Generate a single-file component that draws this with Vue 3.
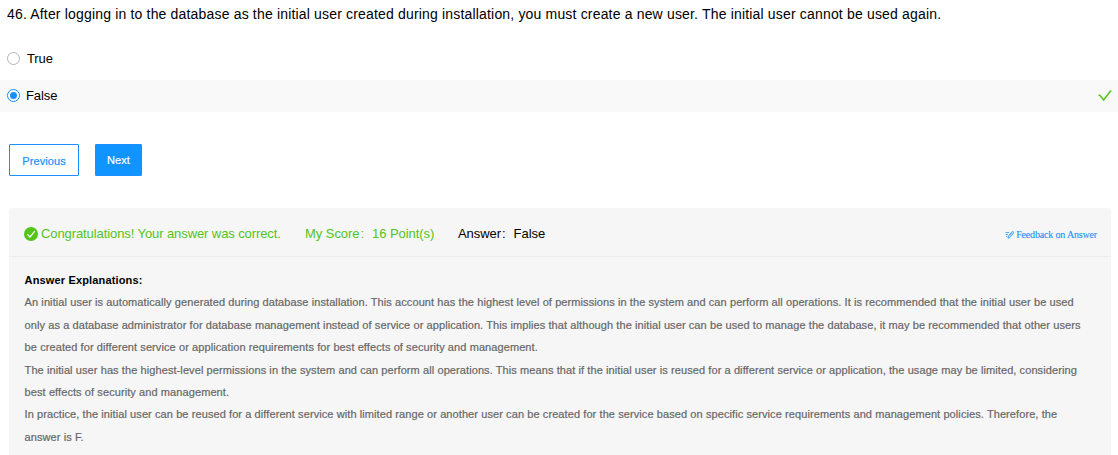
<script setup>
const lines = [
  'An initial user is automatically generated during database installation. This account has the highest level of permissions in the system and can perform all operations. It is recommended that the initial user be used',
  'only as a database administrator for database management instead of service or application. This implies that although the initial user can be used to manage the database, it may be recommended that other users',
  'be created for different service or application requirements for best effects of security and management.',
  'The initial user has the highest-level permissions in the system and can perform all operations. This means that if the initial user is reused for a different service or application, the usage may be limited, considering',
  'best effects of security and management.',
  'In practice, the initial user can be reused for a different service with limited range or another user can be created for the service based on specific service requirements and management policies. Therefore, the',
  'answer is F.',
]
</script>

<template>
  <main class="quiz">
    <div class="question"><span>46. After logging in to the database as the initial user created during installation, you must create a new user. The initial user cannot be used again.</span></div>
    <div class="option first">
      <span class="radio"></span><span class="label true">True</span>
    </div>
    <div class="option selected">
      <span class="radio on"></span><span class="label">False</span>
      <svg class="tick" width="14" height="12" viewBox="0 0 14 12"><path d="M.6 5.3H1.8L5.6 10 12.4 1.2 13.4 1" fill="none" stroke="#52c41a" stroke-width="1.5" /></svg>
    </div>
    <div class="actions">
      <button class="btn previous">Previous</button>
      <button class="btn next">Next</button>
    </div>
    <section class="result">
      <header class="summary">
        <svg class="badge" width="14" height="14" viewBox="0 0 14 14"><circle cx="7" cy="7" r="7" fill="#52c41a" /><path d="M3.3 7.2 6 10 10.8 4.2" fill="none" stroke="#fff" stroke-width="1.2" /></svg>
        <span class="congrats">Congratulations! Your answer was correct.</span>
        <span class="score">My Score<i>:</i>16 Point(s)</span>
        <span class="answer">Answer<i>:</i>False</span>
        <a class="feedback">
          <svg width="9" height="8" viewBox="0 0 9 8"><path d="M.5 1.5H4M.5 3.5H3M1 5.5H2.4M3 7.3 3.6 4.8 6.8 .8 8.5 .8 8 2.8 5 6.5ZM4.6 5.2 7 2" fill="none" stroke="#1890ff" stroke-width=".75" /></svg>
          <span>Feedback on Answer</span>
        </a>
      </header>
      <div class="explanation">
        <h2>Answer Explanations:</h2>
        <p v-for="(line, i) in lines" :key="i"><span>{{ line }}</span></p>
      </div>
    </section>
  </main>
</template>

<style>
body { background: #fff; }
</style>

<style scoped>
.quiz { width: 1118px; height: 455px; overflow: hidden; font-family: "Liberation Sans", Arial, sans-serif; font-size: 13px; color: #000; white-space: nowrap; }
.question { height: 43px; box-sizing: border-box; padding: 4px 0 0 7px; font-size: 14px; line-height: 20px; letter-spacing: .173px; }
.option { height: 32px; box-sizing: border-box; display: flex; align-items: center; padding: 0 6px 0 7px; }
.option.first { height: 30px; margin-bottom: 7px; }
.selected { background: #f9f9f9; padding-bottom: 1px; }
.radio { width: 13px; height: 13px; box-sizing: border-box; border: 1px solid #b5b5b5; border-radius: 50%; background: #fff; display: flex; align-items: center; justify-content: center; }
.radio.on { border-color: #1890ff; }
.radio.on::after { content: ""; width: 7px; height: 7px; border-radius: 50%; background: #1890ff; }
.label { margin-left: 6px; line-height: 20px; letter-spacing: -.1px; }
.label.true { margin-left: 7px; padding-top: 2px; }
.tick { margin-left: auto; }
.actions { display: flex; gap: 16px; padding: 32px 0 0 9px; }
.btn { height: 32px; margin: 0; padding: 0; border: 1px solid #1890ff; border-radius: 1px; font: 11px/28px "Liberation Sans", Arial, sans-serif; letter-spacing: .08px; -webkit-text-stroke: .2px; }
.previous { width: 70px; background: #fff; color: #1890ff; padding-top: 2px; }
.next { width: 47px; background: #1094ff; color: #fff; }
.result { margin: 32px 7px 0 9px; height: 260px; background: #f6f6f6; border-radius: 4px 4px 0 0; }
.summary { height: 49px; box-sizing: border-box; border-bottom: 1px solid #ececec; display: flex; align-items: center; padding: 3px 14px 0 15px; }
.congrats, .score { color: #52c41a; }
.congrats { margin-left: 3px; width: 264px; letter-spacing: -.09px; }
.score { width: 153px; letter-spacing: -.05px; }
.answer { letter-spacing: -.05px; }
i { display: inline-block; width: 12px; padding-left: 1px; box-sizing: border-box; margin-right: .5px; font-style: normal; }
.feedback { margin-left: auto; display: flex; align-items: center; gap: 2px; padding-top: 2px; color: #1890ff; font: 10px/12px "Liberation Serif", "Times New Roman", serif; letter-spacing: -.17px; -webkit-text-stroke: .1px; }
.explanation { padding: 12px 0 0 15.6px; }
h2 { margin: 0 0 .38px; font-size: 11px; line-height: 22px; letter-spacing: .15px; }
p { margin: 0; font-size: 11px; line-height: 22.4px; letter-spacing: .088px; color: #666; -webkit-text-stroke: .2px; }
</style>
